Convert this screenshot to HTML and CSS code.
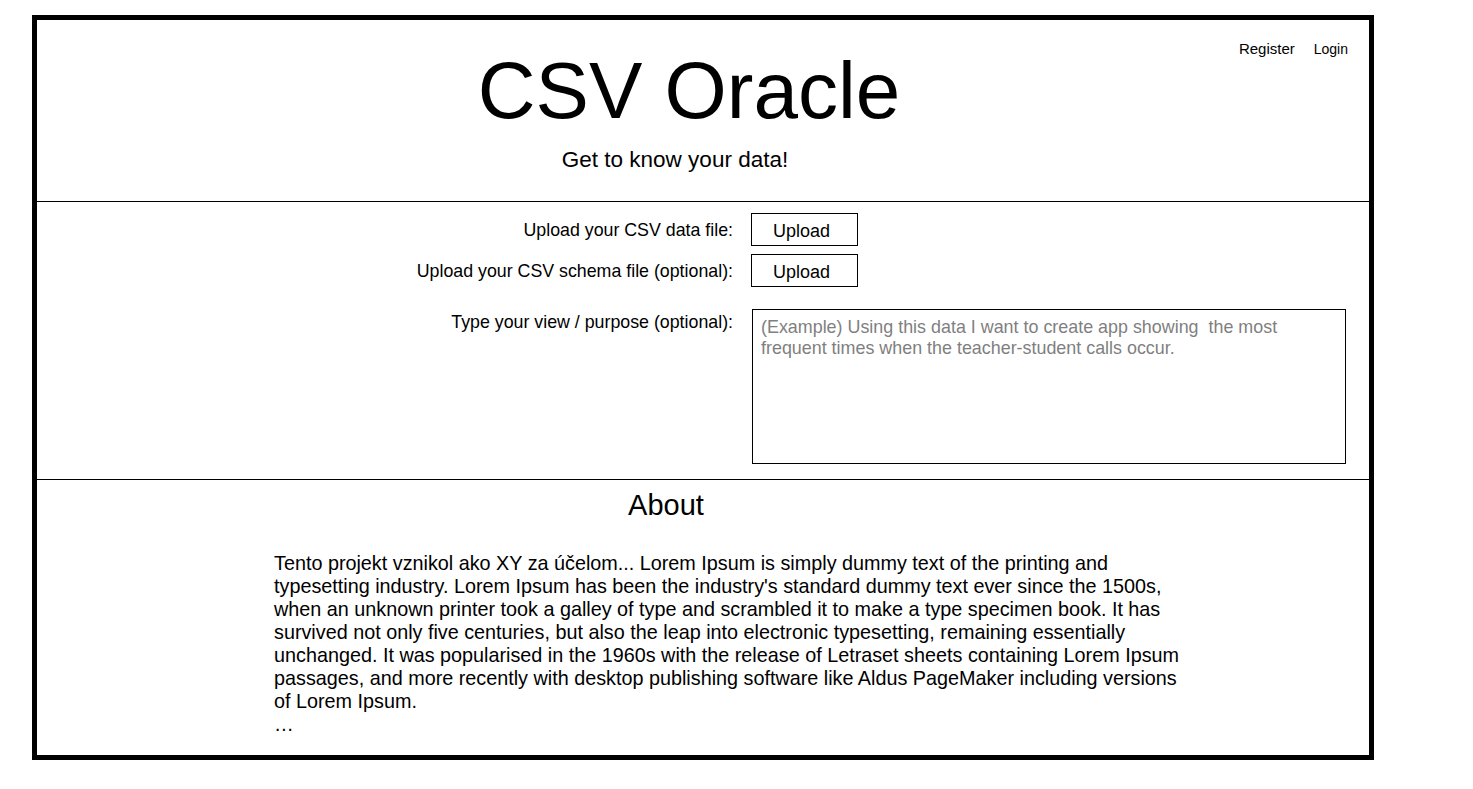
FILE: index.html
```html
<!DOCTYPE html>
<html lang="en">
<head>
    <meta charset="UTF-8">
    <meta name="viewport" content="width=device-width, initial-scale=1.0">
    <title>CSV Oracle</title>
    <link rel="stylesheet" href="styles.css">
</head>
<body>
    <div class="frame">
        <div class="header">
            <div class="title">CSV Oracle</div>
            <div class="nav">
                <a href="#" class="register">Register</a>
                <a href="#" class="login">Login</a>
            </div>
            <div class="tagline">Get to know your data!</div>
        </div>

        <div class="form">
            <label class="label">Upload your CSV data file:</label>
            <div><button class="upload">Upload</button></div>

            <label class="label">Upload your CSV schema file (optional):</label>
            <div><button class="upload">Upload</button></div>

            <label class="label purpose-label">Type your view / purpose (optional):</label>
            <div class="purpose-box">
                <textarea class="purpose" placeholder="(Example) Using this data I want to create app showing  the most&#10;frequent times when the teacher-student calls occur."></textarea>
            </div>
        </div>

        <div class="about">
            <div class="about-title">About</div>
            <p class="about-text">Tento projekt vznikol ako XY za účelom... Lorem Ipsum is simply dummy text of the printing and typesetting industry. Lorem Ipsum has been the industry's standard dummy text ever since the 1500s, when an unknown printer took a galley of type and scrambled it to make a type specimen book. It has survived not only five centuries, but also the leap into electronic typesetting, remaining essentially unchanged. It was popularised in the 1960s with the release of Letraset sheets containing Lorem Ipsum passages, and more recently with desktop publishing software like Aldus PageMaker including versions of Lorem Ipsum.<br>…</p>
        </div>
    </div>
</body>
</html>
```

FILE: styles.css
```css
    body {
        margin: 0;
        background-color: white;
        color: black;
        font-family: "Liberation Sans", Arial, sans-serif;
    }

    .frame {
        margin: 15px 0 0 32px;
        width: 1342px;
        height: 745px;
        box-sizing: border-box;
        border: 5px solid black;
        display: flex;
        flex-direction: column;
    }

    /* header with title + nav */
    .header {
        height: 181px;
        border-bottom: 1px solid black;
        display: grid;
        grid-template-columns: 1fr auto 1fr;
        align-content: start;
    }

    .title {
        grid-column: 2;
        grid-row: 1;
        margin-top: 31px;
        padding-right: 28px;
        font-size: 80px;
        line-height: 1;
    }

    .nav {
        grid-column: 3;
        grid-row: 1;
        justify-self: end;
        align-self: start;
        display: flex;
        gap: 19px;
        padding: 20px 21px 0 0;
        font-size: 15px;
        line-height: 17px;
    }

    .nav a {
        color: black;
        text-decoration: none;
    }

    .nav .login {
        margin-top: 1px;
        font-size: 14px;
    }

    .tagline {
        grid-column: 1 / -1;
        grid-row: 2;
        margin-top: 18px;
        padding-right: 56px;
        text-align: center;
        font-size: 22.5px;
        line-height: 22px;
    }

    /* upload form */
    .form {
        height: 266px;
        padding-top: 11px;
        border-bottom: 1px solid black;
        display: grid;
        grid-template-columns: 696px auto;
        grid-auto-rows: min-content;
        column-gap: 18px;
        row-gap: 8px;
        font-size: 17.8px;
    }

    .label {
        text-align: right;
        align-self: center;
        line-height: 20px;
        padding-top: 1px;
    }

    .upload {
        width: 107px;
        height: 33px;
        box-sizing: border-box;
        border: 1px solid black;
        background-color: white;
        font-family: inherit;
        font-size: 18px;
        color: black;
        padding: 3px 6px 0 0;
    }

    .purpose-label {
        align-self: start;
        margin-top: 16px;
    }

    .purpose-box {
        margin-top: 14px;
        padding-left: 1px;
    }

    .purpose {
        display: block;
        width: 594px;
        height: 155px;
        box-sizing: border-box;
        margin: 0;
        border: 1px solid black;
        padding: 7px 8px 5px 8px;
        resize: none;
        font-family: inherit;
        font-size: 17.9px;
        line-height: 21px;
        white-space: pre-wrap;
    }

    .purpose::placeholder {
        color: #7f7f7f;
        opacity: 1;
    }

    /* about */
    .about {
        flex: 1;
        padding-top: 11px;
    }

    .about-title {
        padding-right: 74px;
        text-align: center;
        font-size: 29px;
        line-height: 28px;
    }

    .about-text {
        margin: 33px 0 0 237px;
        width: 915px;
        font-size: 19.8px;
        line-height: 23px;
    }
```
